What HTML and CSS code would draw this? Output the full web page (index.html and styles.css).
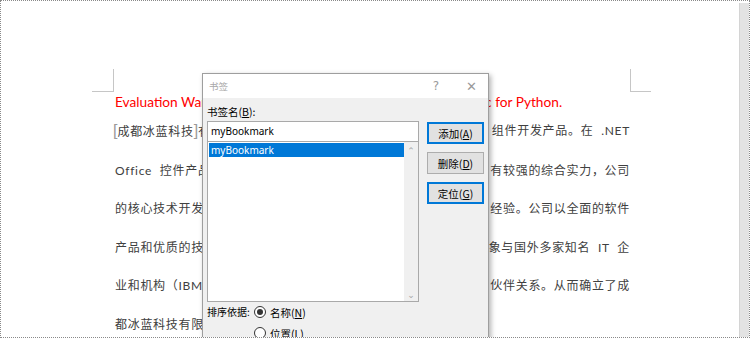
FILE: index.html
```html
<!DOCTYPE html>
<html lang="zh-CN">
<head>
    <meta charset="UTF-8">
    <meta name="viewport" content="width=device-width, initial-scale=1.0">
    <title>书签</title>
    <link rel="stylesheet" href="styles.css">
</head>
<body>
    <div class="window">
        <div class="page">
            <div class="sheet">
                <div class="marks">
                    <span class="mark mark-left"></span>
                    <span class="mark mark-right"></span>
                </div>
                <div class="doc">
                    <p class="warning">Evaluation Warning: The document was created with Spire.Doc for Python.</p>
                    <div class="para">
                        <p class="line">
                            <span><span class="bm">[</span>成都冰蓝科技<span class="bm">]</span>有限公司是一家专业从事</span>
                            <span>组件开发产品。在 .NET</span>
                        </p>
                        <p class="line">
                            <span>Office 控件产品领域，冰蓝科技具</span>
                            <span>有较强的综合实力，公司</span>
                        </p>
                        <p class="line">
                            <span>的核心技术开发人员拥有多年的</span>
                            <span>经验。公司以全面的软件</span>
                        </p>
                        <p class="line">
                            <span>产品和优质的技术服务赢得了客户，并以良好的企业形</span>
                            <span>象与国外多家知名 IT 企</span>
                        </p>
                        <p class="line">
                            <span>业和机构（IBM、Microsoft 等）建立了合作</span>
                            <span>伙伴关系。从而确立了成</span>
                        </p>
                        <p class="line">
                            <span>都冰蓝科技有限公司的地位。</span>
                        </p>
                    </div>
                </div>
            </div>
        </div>
        <div class="scroll-strip"></div>

        <div class="dialog">
            <div class="dialog-title">
                <span class="title-text">书签</span>
                <span class="title-btn">?</span>
                <span class="title-btn close">✕</span>
            </div>
            <div class="dialog-body">
                <div class="field-label">书签名(<u>B</u>):</div>
                <div class="main-row">
                    <div class="name-col">
                        <div class="name-input">myBookmark</div>
                        <div class="list-box">
                            <div class="list-items">
                                <div class="list-item selected">myBookmark</div>
                            </div>
                            <div class="list-scroll">
                                <span class="arrow">&#8963;</span>
                                <span class="arrow">&#8964;</span>
                            </div>
                        </div>
                    </div>
                    <div class="btn-col">
                        <button class="dlg-btn default">添加(<u>A</u>)</button>
                        <button class="dlg-btn">删除(<u>D</u>)</button>
                        <button class="dlg-btn default">定位(<u>G</u>)</button>
                    </div>
                </div>
                <div class="sort-row">
                    <span class="sort-label">排序依据:</span>
                    <div class="radios">
                        <label class="radio"><span class="dot checked"></span><span>名称(<u>N</u>)</span></label>
                        <label class="radio"><span class="dot"></span><span>位置(<u>L</u>)</span></label>
                    </div>
                </div>
            </div>
        </div>
    </div>
</body>
</html>
```

FILE: styles.css
```css
* {
    margin: 0;
    padding: 0;
    box-sizing: border-box;
}

body {
    font-family: "Noto Sans CJK SC", sans-serif;
    background-color: #fff;
}

.window {
    position: relative;
    width: 750px;
    height: 338px;
    border: 1px dotted #8a8a8a;
    display: flex;
    overflow: hidden;
}

.page {
    flex: 1;
    background: #fff;
}

.scroll-strip {
    width: 10px;
    margin-top: 2px;
    background: #e3e3e3;
    border-left: 1px solid #d4d4d4;
}

.sheet {
    padding: 68px 0 0 91px;
    width: 650px;
}

.marks {
    display: flex;
    justify-content: space-between;
    height: 23px;
}

.mark {
    width: 22px;
    height: 23px;
    border-bottom: 1px solid #c6c6c6;
}

.mark-left {
    border-right: 1px solid #c6c6c6;
}

.mark-right {
    width: 21px;
    border-left: 1px solid #c6c6c6;
}

.doc {
    margin: 0 21px 0 23px;
}

.warning {
    font-family: Lato, "Liberation Sans", sans-serif;
    font-size: 13.7px;
    color: #ff0000;
    line-height: 20px;
}

.para {
    color: #404040;
    font-size: 12px;
    letter-spacing: 0.7px;
    word-spacing: 4px;
    line-height: 38.6px;
}

.line {
    display: flex;
    justify-content: space-between;
    white-space: nowrap;
}

.line span {
    font-family: Lato, "Noto Sans CJK SC", sans-serif;
}

.line .bm {
    color: #9a9a9a;
    font-family: "Liberation Sans", sans-serif;
    font-size: 16px;
    letter-spacing: 0;
}

.line .bm:first-child {
    margin-left: -2px;
}

/* dialog */
.dialog {
    position: absolute;
    left: 201px;
    top: 72px;
    width: 287px;
    height: 290px;
    border: 1px solid #9e9e9e;
    background: #f0f0f0;
    box-shadow: 2px 2px 5px rgba(0,0,0,0.3);
    font-size: 10.5px;
    color: #000;
}

.dialog-title {
    display: flex;
    align-items: center;
    height: 24px;
    background: #fff;
    padding-left: 6px;
}

.title-text {
    flex: 1;
    color: #a8a8a8;
    font-size: 9.5px;
}

.title-btn {
    color: #9a9a9a;
    font-family: "DejaVu Sans", sans-serif;
    font-size: 12px;
    margin-right: 27px;
}

.title-btn.close {
    font-size: 13px;
    margin-right: 11px;
}

.dialog-body {
    padding: 6px 0 0 4px;
}

.field-label {
    height: 16px;
    line-height: 16px;
    margin-bottom: 1px;
}

u {
    text-decoration-thickness: 1px;
    text-underline-offset: 1px;
}

.main-row {
    display: flex;
    gap: 8px;
}

.name-col {
    width: 212px;
}

.name-input {
    height: 21px;
    border: 1px solid #a9a9a9;
    background: #fff;
    padding-left: 3px;
    font-family: "Noto Sans", sans-serif;
    font-size: 10px;
    line-height: 19px;
}

.list-box {
    display: flex;
    height: 160px;
    border: 1px solid #a9a9a9;
    border-top: none;
    background: #fff;
}

.list-items {
    flex: 1;
    padding: 1px 0 0 1px;
}

.list-item {
    font-family: "Noto Sans", sans-serif;
    font-size: 10px;
    height: 14px;
    line-height: 14px;
    padding-left: 2px;
}

.list-item.selected {
    background: #0078d7;
    color: #fff;
}

.list-scroll {
    width: 14px;
    background: #f0f0f0;
    display: flex;
    flex-direction: column;
    justify-content: space-between;
    align-items: center;
    padding: 4px 0 1px;
}

.arrow {
    color: #a6a6a6;
    font-family: "DejaVu Sans", sans-serif;
    font-size: 9px;
    line-height: 10px;
}

.btn-col {
    display: flex;
    flex-direction: column;
    gap: 8px;
    padding-top: 1px;
}

.dlg-btn {
    width: 57px;
    height: 22px;
    background: #e1e1e1;
    border: 1px solid #adadad;
    font-family: "Noto Sans CJK SC", sans-serif;
    font-size: 10.5px;
    color: #000;
}

.dlg-btn.default {
    border: 2px solid #0078d7;
}

.sort-row {
    display: flex;
}

.sort-label {
    line-height: 20px;
    width: 47px;
    font-size: 10px;
}

.radios {
    display: flex;
    flex-direction: column;
    gap: 1px;
}

.radio {
    display: flex;
    align-items: center;
    gap: 4px;
    height: 20px;
}

.dot {
    width: 12px;
    height: 12px;
    border: 1px solid #333;
    border-radius: 50%;
    background: #fff;
    display: flex;
    align-items: center;
    justify-content: center;
}

.dot.checked::after {
    content: "";
    width: 6px;
    height: 6px;
    border-radius: 50%;
    background: #333;
}
```
